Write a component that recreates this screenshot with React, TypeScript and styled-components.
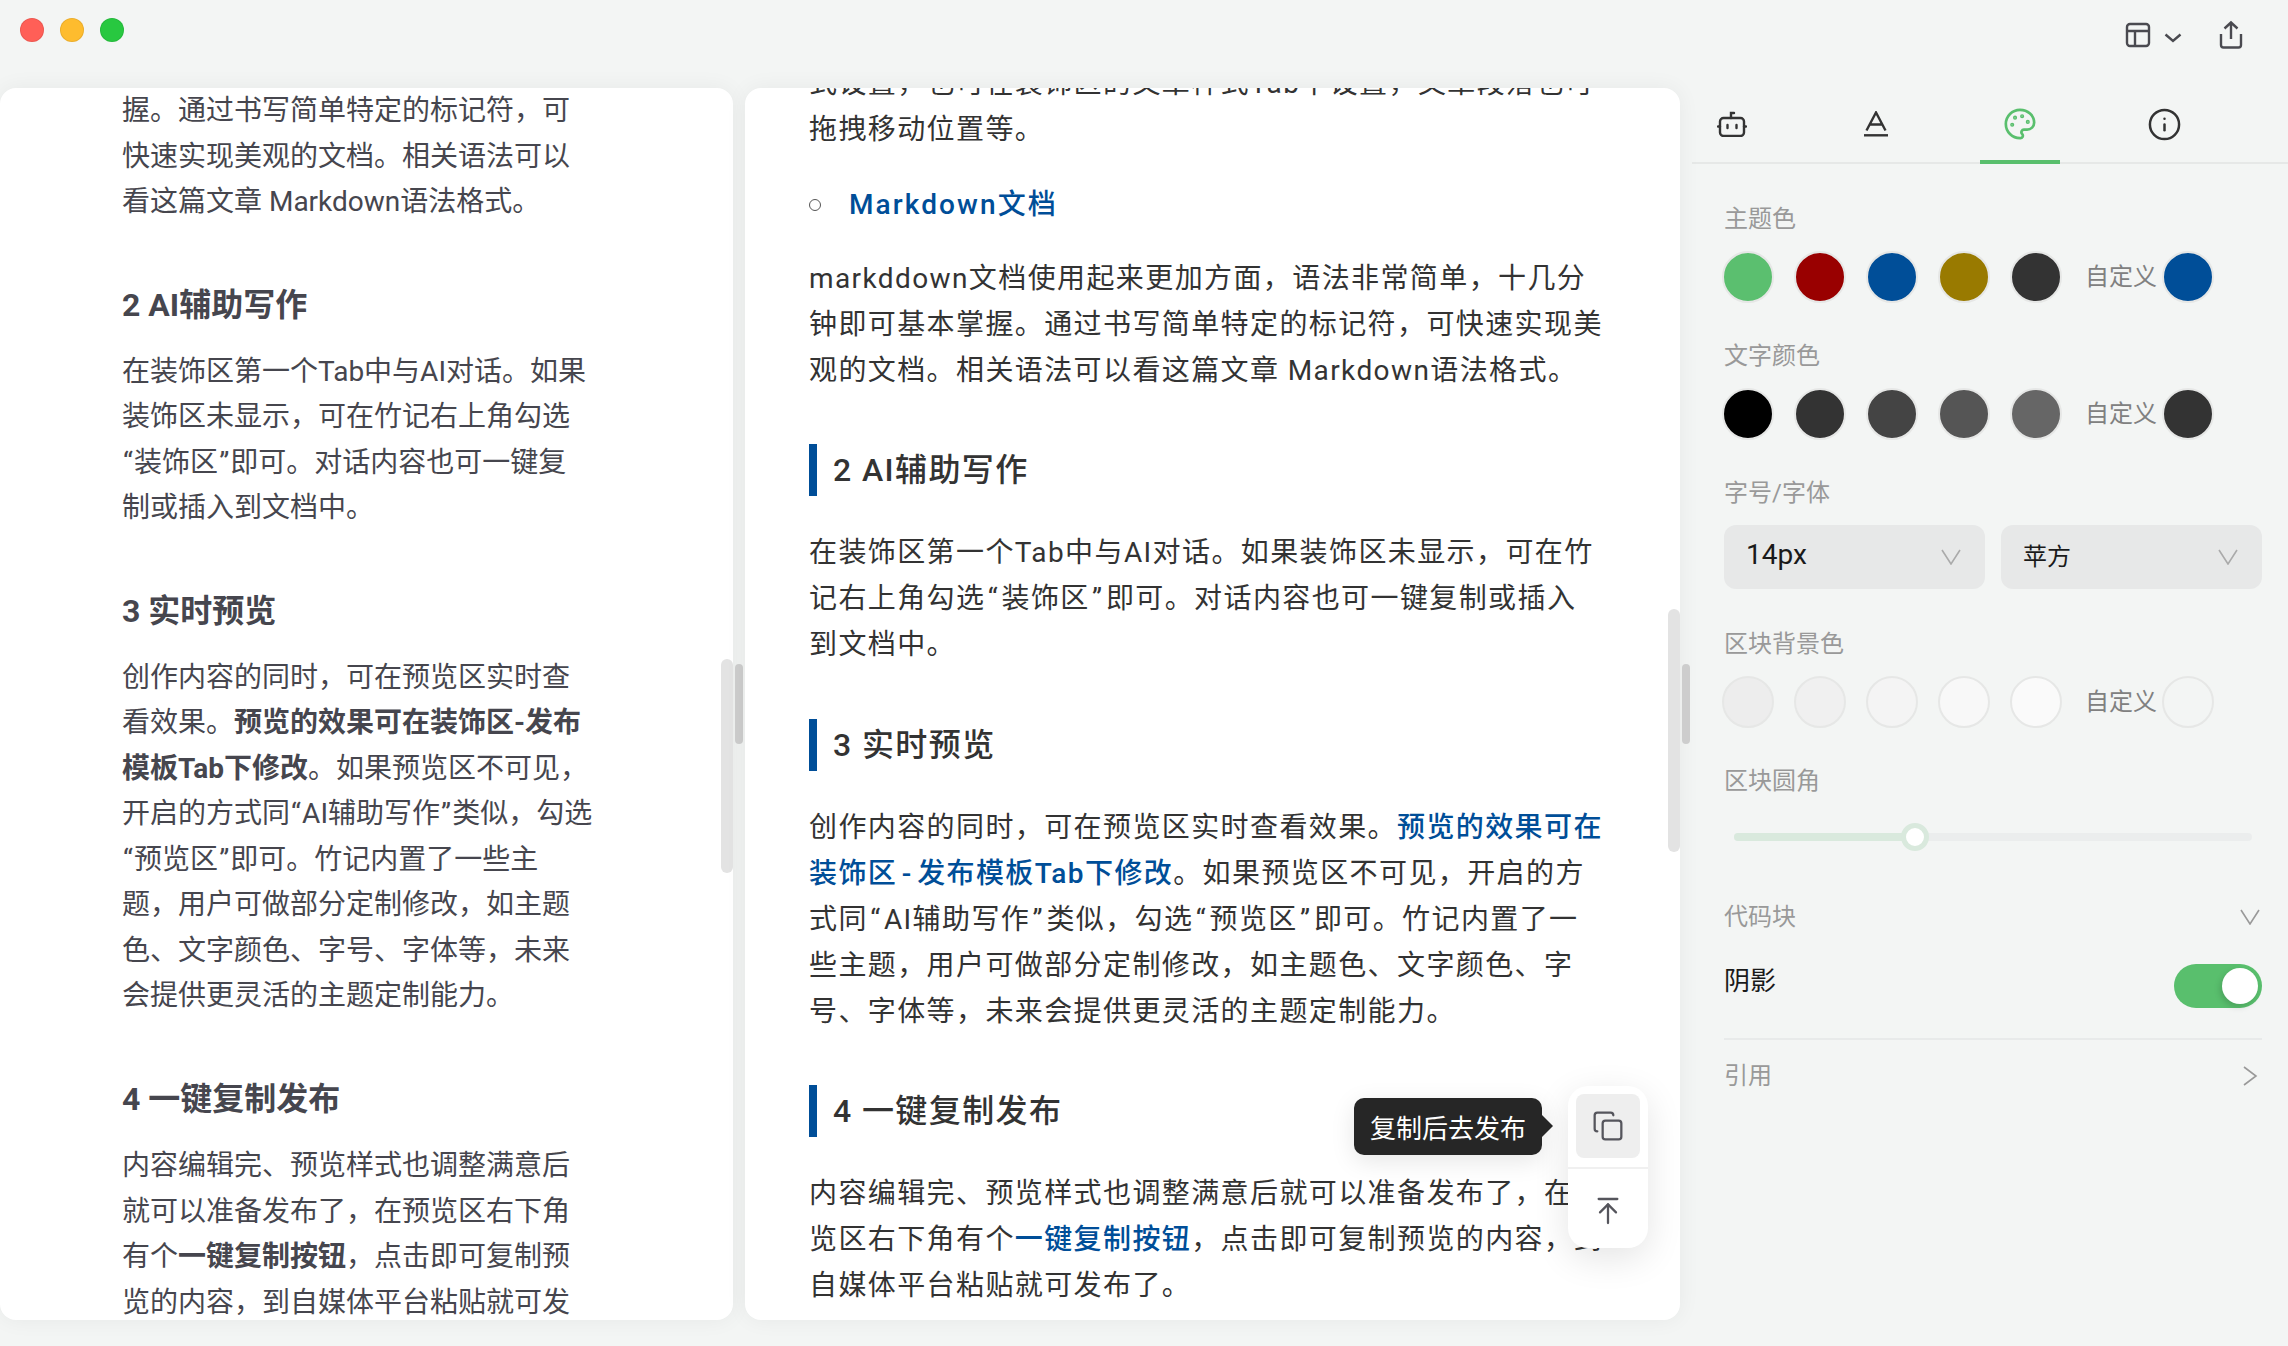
import React from "react";
import styled, { createGlobalStyle } from "styled-components";
import { Palette, Info, Copy, ArrowUpToLine } from "lucide-react";

const Global = createGlobalStyle`
  html, body { margin: 0; padding: 0; background: #f3f5f4; }
  * { box-sizing: border-box; }
  body { font-family: Roboto, "Noto Sans CJK SC", sans-serif; }
`;

const Page = styled.div`
  width: 2288px;
  height: 1346px;
  overflow: hidden;
  background: #f3f5f4;
  display: flex;
  flex-direction: column;
`;

const TitleBar = styled.header`
  height: 88px;
  flex: none;
  display: flex;
  justify-content: space-between;
  padding: 18px 44px 0 20px;
`;

const Lights = styled.div`
  display: flex;
  gap: 16px;
`;

const Light = styled.span<{ $color: string }>`
  width: 24px;
  height: 24px;
  border-radius: 50%;
  background: ${(p) => p.$color};
  box-shadow: inset 0 0 0 1px rgba(0, 0, 0, 0.08);
`;

const TitleTools = styled.div`
  display: flex;
  align-items: flex-start;
  color: #4a4a50;
`;

const LayoutIcon = styled.svg`
  width: 26px;
  height: 28px;
  margin-top: 3px;
`;

const TitleChevron = styled.svg`
  width: 18px;
  height: 10px;
  margin: 15px 0 0 13.5px;
`;

const ShareIcon = styled.svg`
  width: 26px;
  height: 30px;
  margin: 2px 0 0 36px;
`;

const Main = styled.main`
  height: 1232px;
  flex: none;
  display: grid;
  grid-template-columns: 733px 935px 596px;
  grid-template-rows: minmax(0, 1fr);
  column-gap: 12px;
`;

const Pane = styled.div`
  position: relative;
  height: 100%;
  min-height: 0;
`;

const Sheet = styled.div`
  height: 100%;
  overflow: hidden;
  background: #fff;
  border-radius: 16px;
  box-shadow: 0 0 22px rgba(0, 0, 0, 0.055);
`;

const InnerThumb = styled.div<{ $top: number; $height: number }>`
  position: absolute;
  right: 0;
  top: ${(p) => p.$top}px;
  width: 12px;
  height: ${(p) => p.$height}px;
  border-radius: 6px;
  background: #e3e3e3;
`;

const OuterThumb = styled.div`
  position: absolute;
  left: calc(100% + 2px);
  top: 576px;
  width: 8px;
  height: 80px;
  border-radius: 4px;
  background: #cdcdcd;
`;

const SourceBody = styled.article`
  margin-top: 0;
  padding-left: 122px;
  color: #46464e;
  font-size: 28px;
  line-height: 45.5px;
  white-space: nowrap;
`;

const SourceText = styled.p`
  margin: 0;
`;

const SourceHeading = styled.h2`
  margin: 58.5px 0 20.7px;
  font-size: 32px;
  line-height: 45px;
  font-weight: 700;
`;

const Strong = styled.strong`
  font-weight: 700;
`;

const Spaced = styled.span<{ $pad: number }>`
  padding: 0 ${(p) => p.$pad}px;
`;

const PreviewBody = styled.article`
  margin-top: -27.5px;
  padding-left: 64px;
  color: #333;
  font-size: 28px;
  line-height: 46px;
  letter-spacing: 1.4px;
  white-space: nowrap;
`;

const PreviewText = styled.p`
  margin: 0;
`;

const ListItem = styled.div`
  display: flex;
  align-items: center;
  margin: 29px 0 28px;
`;

const Bullet = styled.span`
  width: 12px;
  height: 12px;
  border: 1.5px solid #555;
  border-radius: 50%;
  margin-right: 28px;
`;

const LinkText = styled.a`
  color: #004e98;
  font-weight: 500;
  letter-spacing: 2.1px;
`;

const PreviewHeading = styled.h2`
  margin: 50.5px 0 34px;
  padding-left: 16px;
  border-left: 8px solid #004e98;
  font-size: 32px;
  line-height: 52px;
  height: 52px;
  font-weight: 500;
`;

const Accent = styled.strong`
  color: #004e98;
  font-weight: 500;
`;

const FloatTools = styled.div`
  position: absolute;
  right: 32px;
  bottom: 72px;
  width: 80px;
  height: 162px;
  padding: 8px;
  background: #fff;
  border-radius: 20px;
  box-shadow: 0 10px 36px rgba(0, 0, 0, 0.11);
  color: #55555c;
`;

const ToolButton = styled.button<{ $active?: boolean }>`
  width: 64px;
  height: 64px;
  padding: 0;
  border: 0;
  border-radius: 8px;
  display: flex;
  align-items: center;
  justify-content: center;
  color: inherit;
  background: ${(p) => (p.$active ? "#eeeeee" : "transparent")};
`;

const ToolDivider = styled.div`
  height: 2px;
  margin: 9px -8px 10px;
  background: #f0f0f0;
`;

const Tip = styled.div`
  position: absolute;
  right: calc(100% + 26px);
  top: 12px;
  height: 57px;
  width: 188px;
  display: flex;
  align-items: center;
  justify-content: center;
  background: #262626;
  border-radius: 10px;
  color: #fff;
  font-size: 26px;
  white-space: nowrap;
  box-shadow: 0 6px 24px rgba(0, 0, 0, 0.1);
  &::after {
    content: "";
    position: absolute;
    left: 100%;
    top: 17px;
    border-left: 11px solid #262626;
    border-top: 11px solid transparent;
    border-bottom: 11px solid transparent;
  }
`;

const Side = styled.aside`
  display: flex;
  flex-direction: column;
  font-size: 24px;
`;

const Tabs = styled.nav`
  height: 76px;
  flex: none;
  display: flex;
  gap: 64px;
  border-bottom: 2px solid #e6e8e7;
`;

const Tab = styled.div<{ $active?: boolean }>`
  width: 80px;
  height: 76px;
  flex: none;
  display: flex;
  align-items: center;
  justify-content: center;
  color: ${(p) => (p.$active ? "#59bf6d" : "#333")};
  border-bottom: 4px solid ${(p) => (p.$active ? "#59bf6d" : "transparent")};
`;

const Controls = styled.div`
  padding: 39px 26px 0 32px;
`;

const Group = styled.section<{ $gap?: number }>`
  margin-top: ${(p) => p.$gap ?? 0}px;
`;

const Label = styled.div`
  height: 32px;
  line-height: 32px;
  font-size: 24px;
  color: #999;
  margin-bottom: 16px;
`;

const SwatchRow = styled.div`
  display: flex;
  gap: 20px;
  margin-left: -2px;
  align-items: center;
`;

const Swatch = styled.span<{ $color: string }>`
  width: 52px;
  height: 52px;
  flex: none;
  border-radius: 50%;
  border: 2px solid #e6e7e6;
  background: ${(p) => p.$color};
`;

const CustomBlock = styled.div`
  display: flex;
  align-items: center;
  gap: 5px;
  margin-left: 3px;
`;

const CustomLabel = styled.span`
  color: #808080;
  font-size: 24px;
  margin-bottom: 6px;
`;

const SelectRow = styled.div`
  display: grid;
  grid-template-columns: 1fr 1fr;
  gap: 16px;
`;

const Select = styled.div`
  height: 64px;
  border-radius: 12px;
  background: #e7e8e8;
  padding: 0 24px 0 22px;
  display: flex;
  align-items: center;
  justify-content: space-between;
`;

const SelectValue = styled.span<{ $size: number }>`
  color: #1a1a1a;
  font-size: ${(p) => p.$size}px;
  margin-bottom: 5px;
`;

const SliderBox = styled.div`
  position: relative;
  height: 28px;
  margin: 26px 10px 0;
  display: flex;
  align-items: center;
`;

const Track = styled.div`
  width: 100%;
  height: 8px;
  border-radius: 4px;
  background: #ebeded;
  overflow: hidden;
`;

const Fill = styled.div<{ $width: number }>`
  width: ${(p) => p.$width}px;
  height: 100%;
  background: #d9e9dd;
`;

const Thumb = styled.span<{ $left: number }>`
  position: absolute;
  left: ${(p) => p.$left - 14}px;
  top: 0;
  width: 28px;
  height: 28px;
  border-radius: 50%;
  background: #fff;
  border: 5px solid #d9e9dd;
`;

const CollapseRow = styled.div<{ $gap: number }>`
  margin-top: ${(p) => p.$gap}px;
  height: 32px;
  line-height: 32px;
  display: flex;
  align-items: center;
  justify-content: space-between;
  color: #999;
  padding-right: 2px;
`;

const ShadowRow = styled.div`
  margin-top: 31px;
  height: 44px;
  display: flex;
  align-items: center;
  justify-content: space-between;
`;

const ShadowLabel = styled.span`
  color: #1a1a1a;
  font-size: 26px;
  margin-bottom: 15px;
`;

const Switch = styled.div`
  width: 88px;
  height: 44px;
  border-radius: 22px;
  background: #59bf6d;
  display: flex;
  align-items: center;
  justify-content: flex-end;
  padding-right: 4px;
`;

const Knob = styled.span`
  width: 36px;
  height: 36px;
  border-radius: 50%;
  background: #fff;
  box-shadow: -2px 3px 6px rgba(0, 0, 0, 0.15);
`;

const Rule = styled.hr`
  margin: 30px 0 20px;
  border: 0;
  height: 2px;
  background: #e8eaea;
`;

const Down = ({ color = "#aaa" }: { color?: string }) => (
  <svg width="20" height="16" viewBox="0 0 20 16" fill="none" stroke={color} strokeWidth="1.6">
    <path d="M1 1l9 14 9-14" />
  </svg>
);

const themes = ["#5bbf6f", "#990000", "#004e98", "#997a00", "#333333"];
const texts = ["#000000", "#333333", "#444444", "#555555", "#666666"];
const blocks = ["#ededed", "#f0f0f0", "#f4f4f4", "#f8f8f8", "#fafafa"];

const SwatchLine = ({ colors, custom }: { colors: string[]; custom: string }) => (
  <SwatchRow>
    {colors.map((c, i) => (
      <Swatch key={i} $color={c} />
    ))}
    <CustomBlock>
      <CustomLabel>自定义</CustomLabel>
      <Swatch $color={custom} />
    </CustomBlock>
  </SwatchRow>
);

const LQ = ({ children }: { children: string }) => <Spaced $pad={1.1}>{children}</Spaced>;
const MQ = ({ children }: { children: string }) => <Spaced $pad={2.4}>{children}</Spaced>;

export default function App() {
  return (
    <Page>
      <Global />
      <TitleBar>
        <Lights>
          <Light $color="#ff5f57" />
          <Light $color="#febc2e" />
          <Light $color="#28c840" />
        </Lights>
        <TitleTools>
          <LayoutIcon viewBox="0 0 26 28" fill="none" stroke="currentColor" strokeWidth="2.4">
            <rect x="2" y="3" width="22" height="22" rx="3" />
            <path d="M2 10h22M10 10v15" />
          </LayoutIcon>
          <TitleChevron viewBox="0 0 18 10" fill="none" stroke="currentColor" strokeWidth="2.4">
            <path d="M1.5 1.5L9 8l7.5-6.5" />
          </TitleChevron>
          <ShareIcon viewBox="0 0 26 30" fill="none" stroke="currentColor" strokeWidth="2.4">
            <path d="M13 19V3M6.5 8.500L13 2.500l6.500 6M3 14v11a2.500 2.500 0 0 0 2.500 2.500h15A2.500 2.500 0 0 0 23 25V14" />
          </ShareIcon>
        </TitleTools>
      </TitleBar>
      <Main>
        <Pane>
          <Sheet>
            <SourceBody>
              <SourceText>
                握。通过书写简单特定的标记符，可<br />
                快速实现美观的文档。相关语法可以<br />
                看这篇文章 Markdown语法格式。
              </SourceText>
              <SourceHeading>2 AI辅助写作</SourceHeading>
              <SourceText>
                在装饰区第一个Tab中与AI对话。如果<br />
                装饰区未显示，可在竹记右上角勾选<br />
                <LQ>“</LQ>装饰区<LQ>”</LQ>即可。对话内容也可一键复<br />
                制或插入到文档中。
              </SourceText>
              <SourceHeading>3 实时预览</SourceHeading>
              <SourceText>
                创作内容的同时，可在预览区实时查<br />
                看效果。<Strong>预览的效果可在装饰区-发布</Strong><br />
                <Strong>模板Tab下修改</Strong>。如果预览区不可见，<br />
                开启的方式同<LQ>“</LQ>AI辅助写作<LQ>”</LQ>类似，勾选<br />
                <LQ>“</LQ>预览区<LQ>”</LQ>即可。竹记内置了一些主<br />
                题，用户可做部分定制修改，如主题<br />
                色、文字颜色、字号、字体等，未来<br />
                会提供更灵活的主题定制能力。
              </SourceText>
              <SourceHeading>4 一键复制发布</SourceHeading>
              <SourceText>
                内容编辑完、预览样式也调整满意后<br />
                就可以准备发布了，在预览区右下角<br />
                有个<Strong>一键复制按钮</Strong>，点击即可复制预<br />
                览的内容，到自媒体平台粘贴就可发
              </SourceText>
            </SourceBody>
          </Sheet>
          <InnerThumb $top={571} $height={214} />
          <OuterThumb />
        </Pane>
        <Pane>
          <Sheet>
            <PreviewBody>
              <PreviewText>
                式设置，也可在装饰区的文章样式Tab中设置，文章段落也可<br />
                拖拽移动位置等。
              </PreviewText>
              <ListItem>
                <Bullet />
                <LinkText>Markdown文档</LinkText>
              </ListItem>
              <PreviewText>
                markddown文档使用起来更加方面，语法非常简单，十几分<br />
                钟即可基本掌握。通过书写简单特定的标记符，可快速实现美<br />
                观的文档。相关语法可以看这篇文章 Markdown语法格式。
              </PreviewText>
              <PreviewHeading>2 AI辅助写作</PreviewHeading>
              <PreviewText>
                在装饰区第一个Tab中与AI对话。如果装饰区未显示，可在竹<br />
                记右上角勾选<MQ>“</MQ>装饰区<MQ>”</MQ>即可。对话内容也可一键复制或插入<br />
                到文档中。
              </PreviewText>
              <PreviewHeading>3 实时预览</PreviewHeading>
              <PreviewText>
                创作内容的同时，可在预览区实时查看效果。<Accent>预览的效果可在</Accent><br />
                <Accent>装饰区<Spaced $pad={4.5}>-</Spaced>发布模板Tab下修改</Accent>。如果预览区不可见，开启的方<br />
                式同<MQ>“</MQ>AI辅助写作<MQ>”</MQ>类似，勾选<MQ>“</MQ>预览区<MQ>”</MQ>即可。竹记内置了一<br />
                些主题，用户可做部分定制修改，如主题色、文字颜色、字<br />
                号、字体等，未来会提供更灵活的主题定制能力。
              </PreviewText>
              <PreviewHeading>4 一键复制发布</PreviewHeading>
              <PreviewText>
                内容编辑完、预览样式也调整满意后就可以准备发布了，在预<br />
                览区右下角有个<Accent>一键复制按钮</Accent>，点击即可复制预览的内容，到<br />
                自媒体平台粘贴就可发布了。
              </PreviewText>
            </PreviewBody>
          </Sheet>
          <InnerThumb $top={521} $height={243} />
          <OuterThumb />
          <FloatTools>
            <Tip>复制后去发布</Tip>
            <ToolButton $active>
              <Copy size={32} strokeWidth={1.7} />
            </ToolButton>
            <ToolDivider />
            <ToolButton>
              <ArrowUpToLine size={32} strokeWidth={1.7} />
            </ToolButton>
          </FloatTools>
        </Pane>
        <Side>
          <Tabs>
            <Tab>
              <svg width="30" height="26" viewBox="0 0 30 26" fill="none" stroke="currentColor" strokeWidth="2.4" strokeLinecap="round">
                <rect x="3" y="7" width="24" height="18" rx="3.500" />
                <path d="M14 7V2h3M1 15.500h2M27 15.500h2M10.500 14v3M19.500 14v3" />
              </svg>
            </Tab>
            <Tab>
              <svg width="26" height="26" viewBox="0 0 26 26" fill="none" stroke="currentColor" strokeWidth="2.400">
                <path d="M3.500 19.500L13 1.500l9.500 18M7 13.500h12" />
                <path d="M1 24.300h24" />
              </svg>
            </Tab>
            <Tab $active>
              <Palette size={34} strokeWidth={1.9} />
            </Tab>
            <Tab>
              <Info size={35} strokeWidth={1.7} />
            </Tab>
          </Tabs>
          <Controls>
            <Group>
              <Label>主题色</Label>
              <SwatchLine colors={themes} custom="#004e98" />
            </Group>
            <Group $gap={37}>
              <Label>文字颜色</Label>
              <SwatchLine colors={texts} custom="#333333" />
            </Group>
            <Group $gap={37}>
              <Label>字号/字体</Label>
              <SelectRow>
                <Select>
                  <SelectValue $size={28}>14px</SelectValue>
                  <Down />
                </Select>
                <Select>
                  <SelectValue $size={24}>苹方</SelectValue>
                  <Down />
                </Select>
              </SelectRow>
            </Group>
            <Group $gap={39}>
              <Label>区块背景色</Label>
              <SwatchLine colors={blocks} custom="transparent" />
            </Group>
            <Group $gap={37}>
              <Label>区块圆角</Label>
              <SliderBox>
                <Track>
                  <Fill $width={181} />
                </Track>
                <Thumb $left={181} />
              </SliderBox>
            </Group>
            <CollapseRow $gap={50}>
              代码块
              <Down color="#999" />
            </CollapseRow>
            <ShadowRow>
              <ShadowLabel>阴影</ShadowLabel>
              <Switch>
                <Knob />
              </Switch>
            </ShadowRow>
            <Rule />
            <CollapseRow $gap={0}>
              引用
              <svg width="20" height="20" viewBox="0 0 20 20" fill="none" stroke="#999" strokeWidth="1.6">
                <path d="M4 1l12 9-12 9" />
              </svg>
            </CollapseRow>
          </Controls>
        </Side>
      </Main>
    </Page>
  );
}
